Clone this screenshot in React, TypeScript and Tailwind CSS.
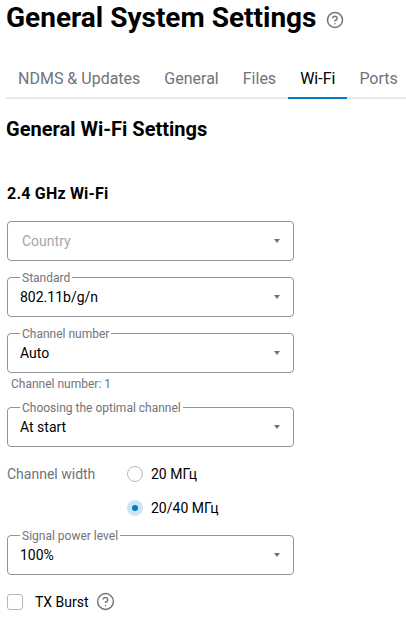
import { HelpCircle } from 'lucide-react'

const tabs = ['NDMS & Updates', 'General', 'Files', 'Wi-Fi', 'Ports']

function SelectField({ label, value }: { label?: string; value?: string }) {
  return (
    <div className="relative flex h-[40px] w-[287px] items-center justify-between rounded-[4px] border border-[#8f9499] pl-[12px] pr-[12px]">
      {label ? (
        <span className="absolute left-[12px] top-[-7px] bg-white px-[2px] text-[12px] leading-[14px] text-[#6f7479]">
          {label}
        </span>
      ) : null}
      {value ? (
        <span className="text-[14px] text-black">{value}</span>
      ) : (
        <span className="pl-[2px] text-[14px] text-[#a3a7ab]">Country</span>
      )}
      <span className="mr-[1px] h-0 w-0 border-x-[3px] border-t-[4px] border-x-transparent border-t-[#6f7479]" />
    </div>
  )
}

function Radio({ label, checked }: { label: string; checked?: boolean }) {
  return (
    <div className="flex h-[16px] items-center gap-[8px]">
      {checked ? (
        <span className="flex h-[16px] w-[16px] items-center justify-center rounded-full bg-[#cce5f5]">
          <span className="h-[6px] w-[6px] rounded-full bg-[#007cc3]" />
        </span>
      ) : (
        <span className="h-[16px] w-[16px] rounded-full border border-[#b5b8bb]" />
      )}
      <span className="text-[14px] text-black">{label}</span>
    </div>
  )
}

export default function App() {
  return (
    <div className="h-[620px] w-[406px] overflow-hidden bg-white pl-[6px] font-['Roboto',sans-serif]">
      <div className="flex h-[36px] items-center gap-[9px]">
        <h1 className="text-[28px] font-bold leading-[36px] text-black">General System Settings</h1>
        <HelpCircle className="mt-[3px] h-[18px] w-[18px] text-[#6f7479]" strokeWidth={2} />
      </div>

      <div className="mt-[25px] flex h-[38px] border-b-2 border-[#e8e9ea]">
        {tabs.map((tab) => (
          <div
            key={tab}
            className={
              tab === 'Wi-Fi'
                ? 'mb-[-2px] shrink-0 whitespace-nowrap border-b-2 border-[#007cc3] px-[12px] pt-[7px] text-[16px] leading-[22px] text-black'
                : 'shrink-0 whitespace-nowrap px-[12px] pt-[7px] text-[16px] leading-[22px] text-[#6f7479]'
            }
          >
            {tab}
          </div>
        ))}
      </div>

      <h2 className="mt-[18px] text-[20px] font-bold leading-[24px] text-black">General Wi-Fi Settings</h2>
      <h3 className="ml-[1px] mt-[43px] text-[16px] font-bold leading-[20px] tracking-[0.2px] text-black">2.4 GHz Wi-Fi</h3>

      <div className="ml-[1px] mt-[17px] flex flex-col items-start">
        <SelectField />
        <div className="h-[16px]" />
        <SelectField label="Standard" value="802.11b/g/n" />
        <div className="h-[16px]" />
        <SelectField label="Channel number" value="Auto" />
        <div className="h-[34px] pl-[4px] pt-[4px] text-[12px] leading-[14px] text-[#6f7479]">Channel number: 1</div>
        <SelectField label="Choosing the optimal channel" value="At start" />

        <div className="mt-[19px] flex">
          <span className="w-[120px] text-[14px] leading-[16px] text-[#6f7479]">Channel width</span>
          <div className="flex flex-col gap-[18px]">
            <Radio label="20 МГц" />
            <Radio label="20/40 МГц" checked />
          </div>
        </div>

        <div className="h-[19px]" />
        <SelectField label="Signal power level" value="100%" />

        <div className="mt-[17px] flex items-center">
          <span className="h-[16px] w-[16px] rounded-[3px] border border-[#b5b8bb]" />
          <span className="ml-[12px] text-[14px] leading-[16px] text-black">TX Burst</span>
          <HelpCircle className="ml-[7px] h-[19px] w-[19px] text-[#6f7479]" strokeWidth={1.8} />
        </div>
      </div>
    </div>
  )
}
